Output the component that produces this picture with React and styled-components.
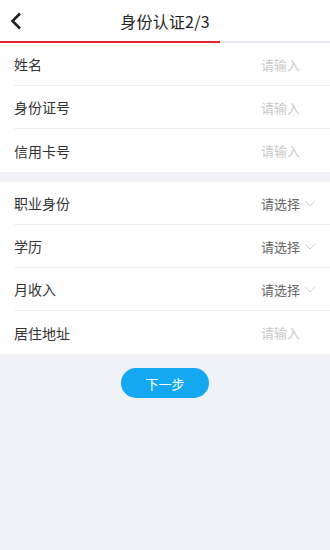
import React from "react";
import styled, { createGlobalStyle } from "styled-components";

const GlobalStyle = createGlobalStyle`
  html, body {
    margin: 0;
    padding: 0;
    background: #f1f2f7;
    font-family: "Noto Sans CJK SC", "Noto Sans", sans-serif;
  }
`;

const Page = styled.div`
  width: 330px;
  min-height: 550px;
  background: #f1f2f7;
`;

const Header = styled.div`
  height: 41px;
  background: #fff;
  display: flex;
  align-items: center;
  justify-content: center;
  position: relative;
`;

const BackButton = styled.div`
  position: absolute;
  left: 10px;
  top: 11px;
  width: 14px;
  height: 20px;
  display: flex;
  align-items: center;
`;

const Title = styled.div`
  font-size: 16px;
  color: #222;
  letter-spacing: 0.2px;
`;

const Progress = styled.div`
  height: 2px;
  background: #e4e7f0;
`;

const ProgressFill = styled.div`
  height: 100%;
  background: #e5242b;
`;

const Group = styled.div`
  background: #fff;
  margin-bottom: ${(p) => (p.$gap ? "10px" : "0")};
`;

const Row = styled.div`
  height: 43px;
  margin-left: 14px;
  padding-right: 14px;
  display: flex;
  align-items: center;
  justify-content: space-between;
  border-bottom: ${(p) => (p.$last ? "none" : "1px solid #eef0f4")};
  box-sizing: border-box;
`;

const Label = styled.span`
  font-size: 14px;
  color: #333;
`;

const Value = styled.div`
  display: flex;
  align-items: center;
  gap: 3px;
`;

const Hint = styled.span`
  font-size: 13px;
  color: ${(p) => (p.$select ? "#666" : "#c9c9c9")};
`;

const Slot = styled.span`
  width: 13px;
  display: flex;
  align-items: center;
  justify-content: flex-end;
`;

const Footer = styled.div`
  display: flex;
  justify-content: center;
  padding-top: 14px;
`;

const NextButton = styled.button`
  width: 88px;
  height: 30px;
  border: none;
  border-radius: 15px;
  background: #14a8f2;
  color: #fff;
  font-family: inherit;
  font-size: 13px;
  cursor: pointer;
`;

const Chevron = () => (
  <svg width="12" height="7" viewBox="0 0 12 7">
    <path d="M1 1l5 5 5-5" fill="none" stroke="#cfcfcf" strokeWidth="1" />
  </svg>
);

const groups = [
  [
    { label: "姓名" },
    { label: "身份证号" },
    { label: "信用卡号" },
  ],
  [
    { label: "职业身份", select: true },
    { label: "学历", select: true },
    { label: "月收入", select: true },
    { label: "居住地址" },
  ],
];

export default function App() {
  return (
    <Page>
      <GlobalStyle />
      <Header>
        <BackButton>
          <svg width="12" height="18" viewBox="0 0 12 18">
            <path
              d="M10 1.5L2.5 9l7.5 7.5"
              fill="none"
              stroke="#222"
              strokeWidth="2.6"
            />
          </svg>
        </BackButton>
        <Title>身份认证2/3</Title>
      </Header>
      <Progress>
        <ProgressFill style={{ width: `${(2 / 3) * 100}%` }} />
      </Progress>
      {groups.map((rows, gi) => (
        <Group key={gi} $gap={gi === 0}>
          {rows.map((r, i) => (
            <Row key={r.label} $last={i === rows.length - 1}>
              <Label>{r.label}</Label>
              <Value>
                <Hint $select={r.select}>{r.select ? "请选择" : "请输入"}</Hint>
                <Slot>{r.select && <Chevron />}</Slot>
              </Value>
            </Row>
          ))}
        </Group>
      ))}
      <Footer>
        <NextButton>下一步</NextButton>
      </Footer>
    </Page>
  );
}
